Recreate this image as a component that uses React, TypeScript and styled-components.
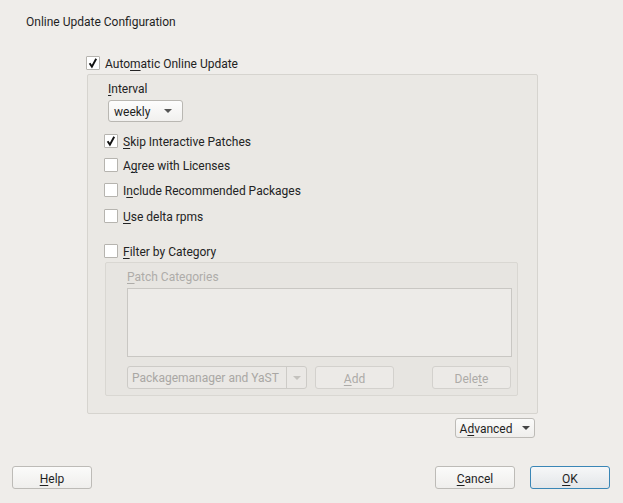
import React from 'react';
import styled, { createGlobalStyle } from 'styled-components';

const GlobalStyle = createGlobalStyle`
  html, body {
    margin: 0;
    padding: 0;
    background: #efedea;
  }
  body {
    font-family: Roboto, "Noto Sans", "Liberation Sans", sans-serif;
    font-size: 12px;
    color: #232323;
  }
  * {
    box-sizing: border-box;
  }
`;

const Page = styled.div`
  width: 623px;
  height: 503px;
  display: flex;
  flex-direction: column;
  background: #efedea;
`;

const Header = styled.div`
  height: 53px;
  padding: 15px 0 0 26px;
  line-height: 14px;
  color: #1f1f1f;
`;

const Main = styled.div`
  margin-left: 86px;
  width: 452px;
  flex: 1;
  display: flex;
  flex-direction: column;
`;

const Mn = styled.span`
  text-decoration: underline;
  text-underline-offset: 2px;
`;

/* text inside a widget, nudged to sit on the same baseline as Qt draws it */
const Caption = styled.span`
  padding-top: 2px;
  line-height: 14px;
`;

const CheckRow = styled.label<{ $mt?: number; $disabled?: boolean }>`
  display: flex;
  align-items: center;
  gap: 5px;
  height: 20px;
  margin-top: ${p => p.$mt ?? 0}px;
  color: ${p => (p.$disabled ? '#aaa8a5' : '#232323')};
`;

const Box = styled.span`
  width: 14px;
  height: 14px;
  background: #ffffff;
  border: 1px solid #b6b4af;
  border-radius: 1px;
  display: inline-flex;
  align-items: center;
  justify-content: center;
  flex: none;
`;

const CheckBox = ({ checked }: { checked?: boolean }) => (
  <Box>
    {checked && (
      <svg width="12" height="12" viewBox="0 0 12 12">
        <path d="M2.6 6.2 L4.9 9.6 L9.2 1.8" fill="none" stroke="#111" strokeWidth="1.9" />
      </svg>
    )}
  </Box>
);

const OuterFrame = styled.div`
  margin: 1px 0 0 1px;
  width: 451px;
  height: 340px;
  border: 1px solid #d6d4cf;
  border-radius: 2px;
  background: #eae8e4;
  padding: 5px 0 0 16px;
  display: flex;
  flex-direction: column;
`;

const FieldLabel = styled.div<{ $disabled?: boolean }>`
  height: 16px;
  line-height: 16px;
  padding: 1px 0 0 4px;
  color: ${p => (p.$disabled ? '#aaa8a5' : '#232323')};
`;

const Combo = styled.div`
  margin: 4px 0 0 4px;
  width: 75px;
  height: 22px;
  border: 1px solid #b9b7b2;
  border-radius: 3px;
  background: linear-gradient(#fdfdfd, #f1f0ee);
  display: flex;
  align-items: center;
  justify-content: space-between;
  padding: 0 10px 0 5px;
  color: #1f1f1f;
`;

const Arrow = styled.span<{ $color?: string }>`
  width: 0;
  height: 0;
  border-left: 4px solid transparent;
  border-right: 4px solid transparent;
  border-top: 4px solid ${p => p.$color ?? '#555'};
`;

const InnerFrame = styled.div`
  margin: 1px 0 0 1px;
  width: 413px;
  height: 134px;
  border: 1px solid #d9d7d2;
  border-radius: 2px;
  background: #e7e5e1;
  padding: 6px 6px 0 21px;
  display: flex;
  flex-direction: column;
`;

const SmallLabel = styled.div`
  height: 14px;
  line-height: 14px;
  padding-top: 1px;
  color: #aeaca9;
`;

const ListBox = styled.div`
  margin-top: 5px;
  width: 385px;
  height: 69px;
  border: 1px solid #c9c7c3;
  background: #edebe8;
`;

const ButtonRow = styled.div`
  margin-top: 9px;
  display: flex;
  height: 23px;
`;

const DisabledCombo = styled.div`
  width: 180px;
  height: 23px;
  border: 1px solid #cdcbc7;
  border-radius: 3px;
  background: #eae8e5;
  display: flex;
  color: #a9a7a4;
`;

const ComboText = styled.div`
  flex: 1;
  border-right: 1px solid #cdcbc7;
  padding: 1px 0 0 4px;
  line-height: 21px;
`;

const ComboArrow = styled.div`
  width: 19px;
  display: flex;
  align-items: center;
  justify-content: center;
`;

const Button = styled.button<{ $disabled?: boolean; $default?: boolean; $w?: number; $h?: number; $ml?: number }>`
  width: ${p => p.$w ?? 80}px;
  height: ${p => p.$h ?? 23}px;
  margin-left: ${p => p.$ml ?? 0}px;
  font: inherit;
  padding: 0;
  border-radius: 3px;
  border: 1px solid ${p => (p.$default ? '#3a86b6' : p.$disabled ? '#d3d1cd' : '#bdbbb7')};
  background: ${p =>
    p.$default
      ? 'linear-gradient(#f6f7f8, #e3e6e9)'
      : p.$disabled
      ? '#eceae7'
      : 'linear-gradient(#fbfbfa, #efeeec)'};
  color: ${p => (p.$disabled ? '#adaba8' : '#1f1f1f')};
  display: inline-flex;
  align-items: center;
  justify-content: center;
  gap: 10px;
`;

const AdvancedRow = styled.div`
  display: flex;
  justify-content: flex-end;
  margin: 4px 3px 0 0;
`;

const Footer = styled.div`
  display: flex;
  align-items: center;
  padding: 0 13px 14px 12px;
  gap: 15px;
`;

const Spacer = styled.div`
  flex: 1;
`;

export default function App() {
  return (
    <Page>
      <GlobalStyle />
      <Header>Online Update Configuration</Header>
      <Main>
        <CheckRow>
          <CheckBox checked />
          <Caption>
            Auto<Mn>m</Mn>atic Online Update
          </Caption>
        </CheckRow>
        <OuterFrame>
          <FieldLabel>
            <Mn>I</Mn>nterval
          </FieldLabel>
          <Combo>
            <Caption>weekly</Caption>
            <Arrow />
          </Combo>
          <CheckRow $mt={9}>
            <CheckBox checked />
            <Caption>
              <Mn>S</Mn>kip Interactive Patches
            </Caption>
          </CheckRow>
          <CheckRow $mt={4}>
            <CheckBox />
            <Caption>
              A<Mn>g</Mn>ree with Licenses
            </Caption>
          </CheckRow>
          <CheckRow $mt={5}>
            <CheckBox />
            <Caption>
              I<Mn>n</Mn>clude Recommended Packages
            </Caption>
          </CheckRow>
          <CheckRow $mt={6}>
            <CheckBox />
            <Caption>
              <Mn>U</Mn>se delta rpms
            </Caption>
          </CheckRow>
          <CheckRow $mt={15}>
            <CheckBox />
            <Caption>
              <Mn>F</Mn>ilter by Category
            </Caption>
          </CheckRow>
          <InnerFrame>
            <SmallLabel>
              <Mn>P</Mn>atch Categories
            </SmallLabel>
            <ListBox />
            <ButtonRow>
              <DisabledCombo>
                <ComboText>Packagemanager and YaST</ComboText>
                <ComboArrow>
                  <Arrow $color="#c4c2be" />
                </ComboArrow>
              </DisabledCombo>
              <Button $disabled $w={79} $ml={8}>
                <Caption>
                  <Mn>A</Mn>dd
                </Caption>
              </Button>
              <Spacer />
              <Button $disabled $w={79}>
                <Caption>
                  Dele<Mn>t</Mn>e
                </Caption>
              </Button>
            </ButtonRow>
          </InnerFrame>
        </OuterFrame>
        <AdvancedRow>
          <Button $w={80} $h={20}>
            <Caption>
              A<Mn>d</Mn>vanced
            </Caption>
            <Arrow $color="#444" />
          </Button>
        </AdvancedRow>
      </Main>
      <Footer>
        <Button>
          <Caption>
            <Mn>H</Mn>elp
          </Caption>
        </Button>
        <Spacer />
        <Button>
          <Caption>
            <Mn>C</Mn>ancel
          </Caption>
        </Button>
        <Button $default>
          <Caption>
            <Mn>O</Mn>K
          </Caption>
        </Button>
      </Footer>
    </Page>
  );
}
